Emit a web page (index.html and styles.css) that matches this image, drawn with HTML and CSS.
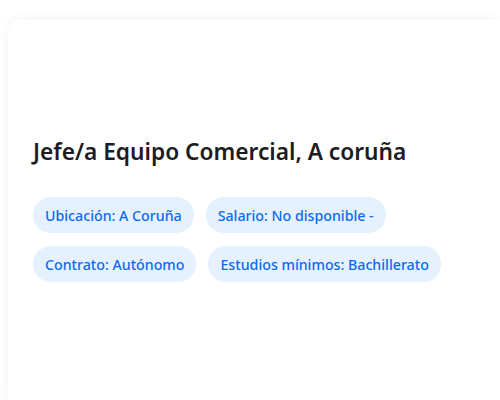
FILE: index.html
```html
<!DOCTYPE html>
<html lang="es">
<head>
<meta charset="utf-8">
<link rel="stylesheet" href="styles.css">
</head>
<body>
<div class="card">
  <h2 class="title">Jefe/a Equipo Comercial, A coruña</h2>
  <div class="chips">
    <span class="chip">Ubicación: A Coruña</span>
    <span class="chip">Salario: No disponible -</span>
  </div>
  <div class="chips">
    <span class="chip">Contrato: Autónomo</span>
    <span class="chip">Estudios mínimos: Bachillerato</span>
  </div>
</div>
</body>
</html>
```
FILE: styles.css
```css
html, body {
  margin: 0;
  background: #ffffff;
}
body {
  padding: 20px 0 0 8px;
  font-family: "Noto Sans", "Open Sans", sans-serif;
}
.card {
  box-sizing: border-box;
  background: #ffffff;
  border-radius: 12px 0 0 0;
  box-shadow: 0 0 12px rgba(0, 0, 0, 0.06);
  min-height: 380px;
  padding: 117px 25px 0 25px;
}
.title {
  margin: 0 0 30px 0;
  font-size: 22.7px;
  font-weight: 600;
  line-height: 30px;
  color: #1c1c22;
}
.chips {
  display: flex;
  gap: 12px;
  margin-bottom: 13px;
}
.chip {
  display: inline-flex;
  align-items: center;
  height: 36px;
  padding: 0 12px;
  border-radius: 18px;
  background: #e5f1ff;
  color: #0b6bf0;
  font-size: 14.2px;
  font-weight: 500;
  white-space: nowrap;
}
```
